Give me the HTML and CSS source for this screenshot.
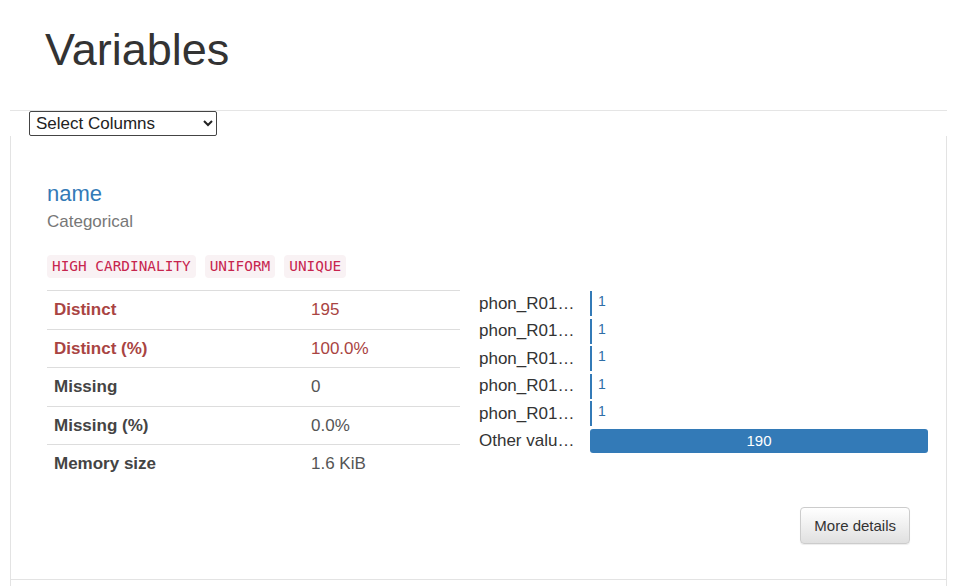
FILE: index.html
```html
<!DOCTYPE html>
<html lang="en">
<head>
  <meta charset="UTF-8">
  <meta name="viewport" content="width=device-width, initial-scale=1.0">
  <title>Variables</title>
  <link rel="stylesheet" href="styles.css">
</head>
<body>
  <div class="container">
    <div class="page-header">
      <h1>Variables</h1>
    </div>
    <select class="col-select">
      <option>Select Columns</option>
    </select>

    <div class="variable">
      <p class="var-name">name</p>
      <p class="var-type">Categorical</p>
      <div class="alerts">
        <code>HIGH CARDINALITY</code>
        <code>UNIFORM</code>
        <code>UNIQUE</code>
      </div>

      <div class="var-body">
        <table class="stats">
          <tr class="alert"><th>Distinct</th><td>195</td></tr>
          <tr class="alert"><th>Distinct (%)</th><td>100.0%</td></tr>
          <tr><th>Missing</th><td>0</td></tr>
          <tr><th>Missing (%)</th><td>0.0%</td></tr>
          <tr><th>Memory size</th><td>1.6 KiB</td></tr>
        </table>

        <div class="freq">
          <div class="freq-row">
            <span class="freq-label" title="phon_R01_S01_1">phon_R01…</span>
            <span class="freq-bar small"></span><span class="freq-count">1</span>
          </div>
          <div class="freq-row">
            <span class="freq-label" title="phon_R01_S01_2">phon_R01…</span>
            <span class="freq-bar small"></span><span class="freq-count">1</span>
          </div>
          <div class="freq-row">
            <span class="freq-label" title="phon_R01_S01_3">phon_R01…</span>
            <span class="freq-bar small"></span><span class="freq-count">1</span>
          </div>
          <div class="freq-row">
            <span class="freq-label" title="phon_R01_S01_4">phon_R01…</span>
            <span class="freq-bar small"></span><span class="freq-count">1</span>
          </div>
          <div class="freq-row">
            <span class="freq-label" title="phon_R01_S01_5">phon_R01…</span>
            <span class="freq-bar small"></span><span class="freq-count">1</span>
          </div>
          <div class="freq-row last">
            <span class="freq-label" title="Other values (190)">Other valu…</span>
            <span class="freq-bar full">190</span>
          </div>
        </div>
      </div>

      <div class="actions">
        <button type="button" class="btn">More details</button>
      </div>
    </div>
    <div class="variable next"></div>
  </div>
</body>
</html>
```

FILE: styles.css
```css
body {
  font-family: "Liberation Sans", Arial, sans-serif;
  font-size: 17px;
  color: #333;
  margin: 0;
  padding: 0;
  background: #fff;
}
.container {
  margin-left: 10px;
  width: 937px;
}
.page-header {
  border-bottom: 1px solid #e5e5e5;
  padding: 26px 0 36px 35px;
}
.page-header h1 {
  margin: 0;
  font-size: 45px;
  font-weight: normal;
  line-height: 48px;
  color: #333;
}
.col-select {
  display: block;
  margin-left: 19px;
  width: 188px;
  height: 25px;
  font-family: "Liberation Sans", Arial, sans-serif;
  font-size: 17px;
  color: #222;
  border: 1px solid #444;
  border-radius: 2px;
  background: #fff;
  padding: 0 2px;
}
.variable {
  border-left: 1px solid #e3e3e3;
  border-right: 1px solid #e3e3e3;
  border-bottom: 1px solid #e3e3e3;
  padding: 45px 18px 35px 36px;
}
.variable.next {
  border-bottom: none;
  padding: 0;
  height: 6px;
}
.var-name {
  margin: 0;
  font-size: 22px;
  line-height: 26px;
  color: #337ab7;
}
.var-type {
  margin: 3px 0 0;
  font-size: 17px;
  line-height: 24px;
  color: #777;
}
.alerts {
  display: flex;
  gap: 9px;
  margin-top: 21px;
}
.alerts code {
  font-family: "DejaVu Sans Mono", "Liberation Mono", monospace;
  font-size: 14.4px;
  line-height: 19px;
  padding: 2px 5px;
  color: #c7254e;
  background: #f9f2f4;
  border-radius: 4px;
}
.var-body {
  display: grid;
  grid-template-columns: 413px 449px;
  column-gap: 19px;
  margin-top: 12px;
}
.stats {
  border-collapse: collapse;
  width: 100%;
}
.stats th, .stats td {
  text-align: left;
  border-top: 1px solid #ddd;
  padding: 9px 7px 8.5px;
  line-height: 20px;
}
.stats th {
  width: 243px;
  font-weight: bold;
  color: #444;
}
.stats td {
  color: #555;
}
.stats tr.alert th, .stats tr.alert td {
  color: #a94442;
}
.freq-row {
  display: flex;
  align-items: center;
  height: 27.5px;
}
.freq-row.last {
  height: 27px;
}
.freq-label {
  width: 99px;
  margin-right: 12px;
  white-space: nowrap;
  overflow: hidden;
  color: #333;
}
.freq-bar {
  background: #337ab7;
  height: 25px;
}
.freq-bar.small {
  width: 2px;
}
.freq-count {
  margin-left: 6px;
  font-size: 14px;
  color: #2f6ea6;
  align-self: flex-start;
  padding-top: 3px;
}
.freq-bar.full {
  flex: 1;
  height: 24px;
  border-radius: 3px;
  color: #fff;
  font-size: 15px;
  line-height: 24px;
  text-align: center;
}
.actions {
  display: flex;
  justify-content: flex-end;
  margin-top: 24px;
  padding-right: 18px;
}
.btn {
  font-family: "Liberation Sans", Arial, sans-serif;
  font-size: 15px;
  color: #333;
  padding: 9px 13px;
  line-height: 17px;
  border: 1px solid #ccc;
  border-radius: 4px;
  background: linear-gradient(to bottom, #fff 0, #e0e0e0 100%);
  box-shadow: inset 0 1px 0 rgba(255, 255, 255, 0.15), 0 1px 1px rgba(0, 0, 0, 0.075);
  cursor: pointer;
}
```
